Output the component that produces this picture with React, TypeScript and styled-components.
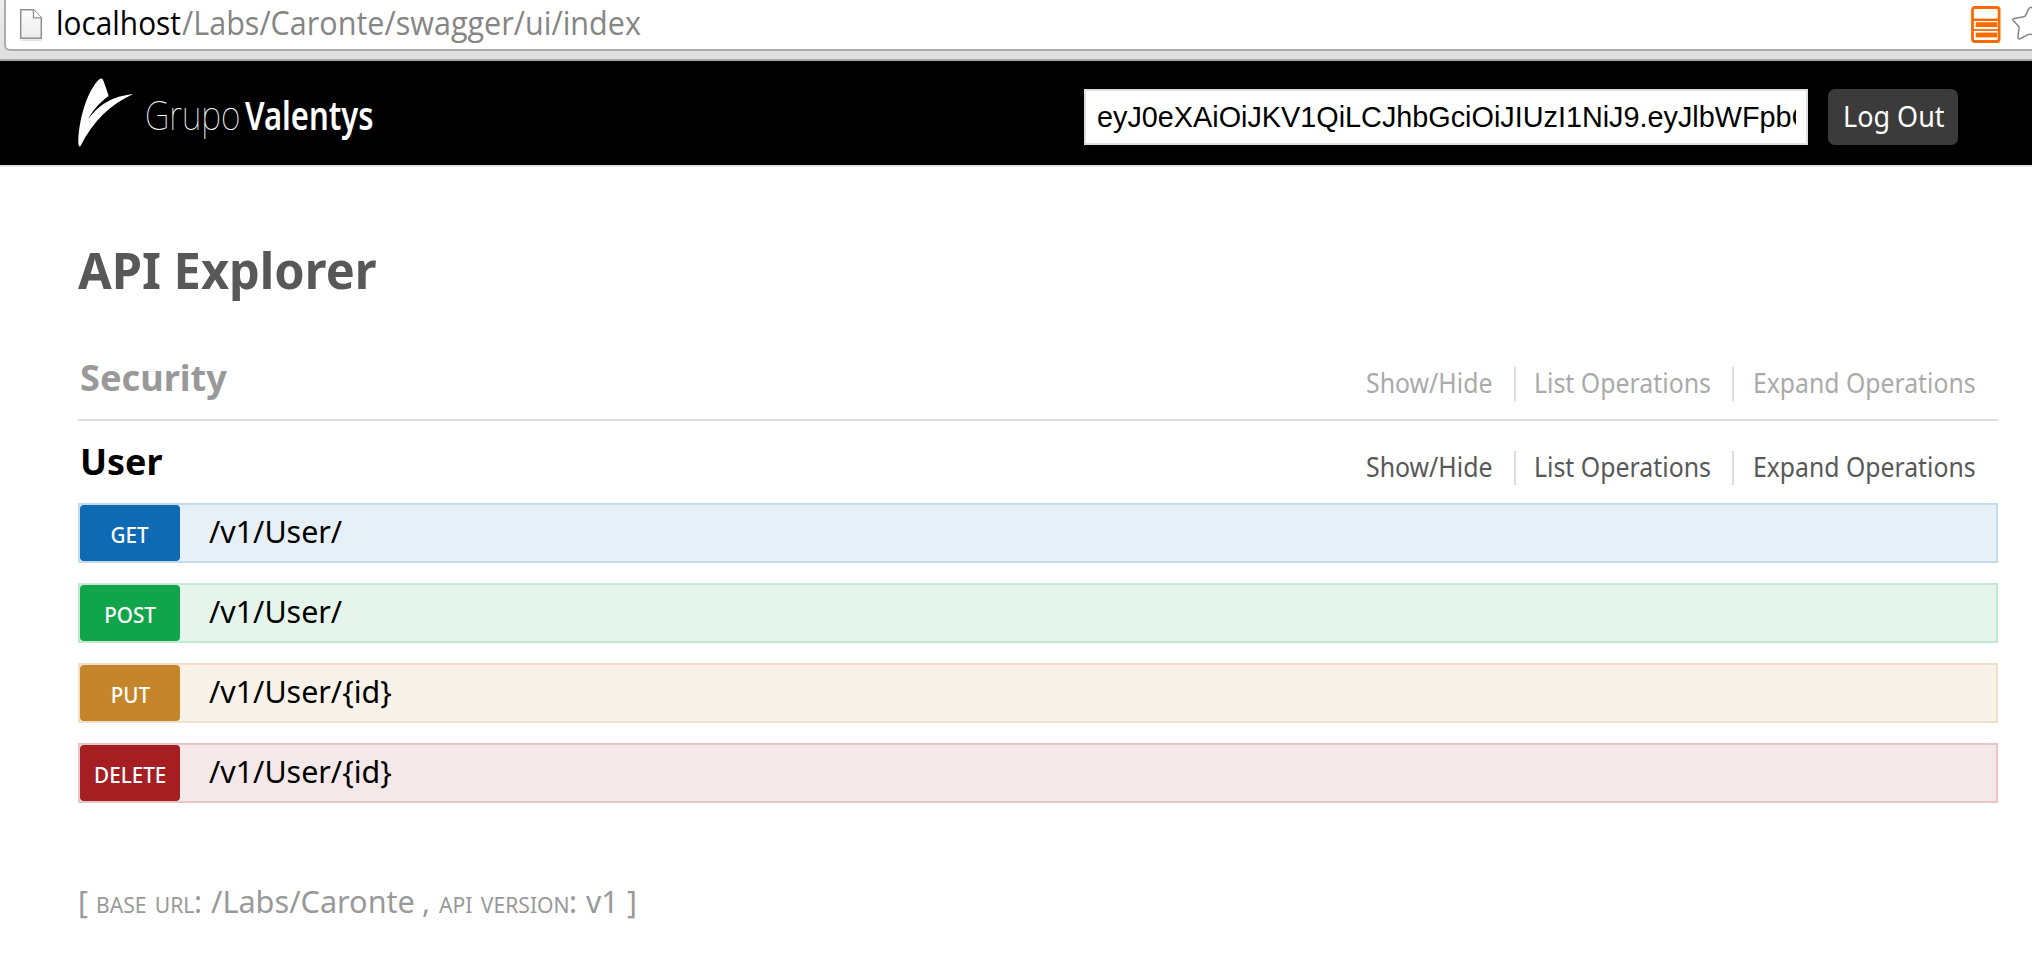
import React from "react";
import styled, { createGlobalStyle } from "styled-components";

const GlobalStyle = createGlobalStyle`
  * { box-sizing: border-box; }
  body {
    margin: 0;
    background: #fff;
    overflow: hidden;
    font-family: "Noto Sans", "Open Sans", sans-serif;
  }
`;

/* Slightly condensed text run; $w reserves its layout width. */
const Condensed = styled.span<{ $scale: number; $w?: number; $origin?: string }>`
  display: inline-block;
  flex: none;
  width: ${(p) => (p.$w ? `${p.$w}px` : "auto")};
  white-space: nowrap;
  transform: scaleX(${(p) => p.$scale});
  transform-origin: ${(p) => p.$origin ?? "left"} center;
`;

const Toolbar = styled.div`
  height: 61px;
  padding-left: 4px;
  background: linear-gradient(#eeeeee, #dfdfdf);
  border-bottom: 2px solid #a6a6a6;
`;

const AddressBar = styled.div`
  display: flex;
  align-items: flex-start;
  height: 51px;
  padding-left: 13px;
  background: #fff;
  border: solid #acacac;
  border-width: 0 0 2px 2px;
  border-bottom-left-radius: 6px;
`;

const Url = styled.div`
  display: flex;
  flex: 1;
  margin-left: 11px;
  font-family: "Open Sans", sans-serif;
  font-size: 32px;
  line-height: 46px;
  color: #858585;
`;

const Host = styled(Condensed)`
  color: #000;
`;

const BarIcons = styled.div`
  display: flex;
  flex: none;
  width: 64px;
  height: 49px;
`;

const Header = styled.header`
  display: flex;
  justify-content: space-between;
  height: 106px;
  padding: 0 74px 0 78px;
  background: #000;
  border-bottom: 2px solid #e6e6e6;
`;

const Brand = styled.div`
  display: flex;
  align-items: flex-start;
  color: #fff;
`;

const Mark = styled.svg`
  flex: none;
  margin-top: 17px;
`;

const BrandName = styled.div`
  display: flex;
  align-items: baseline;
  margin-left: 9px;
  line-height: 106px;
`;

const BrandLight = styled(Condensed)`
  font-size: 41px;
  font-weight: 100;
`;

const BrandStrong = styled(Condensed)`
  font-size: 39.5px;
  font-weight: 600;
`;

const Session = styled.div`
  display: flex;
  gap: 20px;
  padding-top: 28px;
`;

const TokenInput = styled.input`
  width: 724px;
  height: 56px;
  padding: 0 10px 0 11px;
  border: 2px solid #dfdfdf;
  border-radius: 0;
  outline: none;
  background: #fff;
  color: #000;
  font-family: "Liberation Sans", Arial, sans-serif;
  font-size: 28.8px;
`;

const LogOut = styled.button`
  width: 130px;
  height: 56px;
  padding: 0 0 2px 15px;
  border: 0;
  border-radius: 7px;
  background: #3b3b3b;
  color: #fff;
  font-family: inherit;
  font-size: 28.8px;
  line-height: 54px;
  text-align: left;
`;

const Main = styled.main`
  width: 1998px;
  padding: 73px 0 0 78px;
`;

const Title = styled.h1`
  margin: 0 0 37px;
  font-size: 50.4px;
  line-height: 60px;
  color: #585858;
`;

const ResourceHead = styled.div<{ $closed?: boolean }>`
  display: flex;
  justify-content: space-between;
  height: ${(p) => (p.$closed ? 84 : 82)}px;
  border-bottom: ${(p) => (p.$closed ? "2px solid #dddddd" : "0")};
`;

const ResourceName = styled.h2<{ $closed?: boolean }>`
  margin: 21px 0 0 2px;
  font-size: 36px;
  line-height: 40px;
  color: ${(p) => (p.$closed ? "#999999" : "#000")};
`;

const Options = styled.ul<{ $closed?: boolean }>`
  display: flex;
  margin: 30px 0 0;
  padding: 0;
  list-style: none;
  font-size: 26.6px;
  line-height: 32px;
  color: ${(p) => (p.$closed ? "#aaaaaa" : "#585858")};
`;

const Option = styled.li<{ $w: number; $pad: number; $last?: boolean }>`
  width: ${(p) => p.$w}px;
  height: 34px;
  padding-left: ${(p) => p.$pad}px;
  border-right: ${(p) => (p.$last ? "0" : "2px solid #dddddd")};
`;

const Operation = styled.div<{ $bg: string; $line: string }>`
  display: flex;
  height: 60px;
  margin-bottom: 20px;
  background: ${(p) => p.$bg};
  border: 2px solid ${(p) => p.$line};
`;

const Method = styled.span<{ $color: string }>`
  width: 100px;
  height: 56px;
  border-radius: 4px;
  background: ${(p) => p.$color};
  color: #fff;
  font-size: 22.4px;
  font-weight: 500;
  line-height: 60px;
  text-align: center;
`;

const Path = styled.span`
  padding-left: 28.5px;
  font-size: 31px;
  line-height: 52px;
  color: #000;
`;

const Footer = styled.footer`
  display: flex;
  align-items: baseline;
  margin-top: 76px;
  font-size: 31px;
  line-height: 44px;
  color: #999999;
`;

const SmallCaps = styled(Condensed)`
  font-size: 22.4px;
  word-spacing: 3px;
  text-transform: uppercase;
`;

const operations = [
  { method: "GET", path: "/v1/User/", color: "#0f6ab4", bg: "#e7eff7", line: "#c3d9ec" },
  { method: "POST", path: "/v1/User/", color: "#10a54a", bg: "#e5f5eb", line: "#c3e8d1" },
  { method: "PUT", path: "/v1/User/{id}", color: "#c5862b", bg: "#f9f2e9", line: "#f0e0ca" },
  { method: "DELETE", path: "/v1/User/{id}", color: "#a41e22", bg: "#f5e8e8", line: "#e8c6c7" },
];

function PageIcon() {
  return (
    <svg width="26" height="44" viewBox="0 0 26 44">
      <defs>
        <linearGradient id="paper" x1="0" y1="0" x2="0" y2="1">
          <stop offset="0" stopColor="#fdfdfd" />
          <stop offset="1" stopColor="#ececec" />
        </linearGradient>
      </defs>
      <path d="M1.8 40.2H22.5" stroke="#e2e2e2" strokeWidth="1.5" />
      <path d="M1.7 9.7H14.5L22.3 17.8V38.3H1.7Z" fill="url(#paper)" stroke="#8f8f8f" strokeWidth="1.5" />
      <path d="M14.5 9.7V17.8H22.3" fill="#fff" stroke="#8f8f8f" strokeWidth="1.3" />
    </svg>
  );
}

function ToolbarIcons() {
  return (
    <svg width="64" height="49" viewBox="1968 0 64 49">
      <g fill="none" stroke="#ff6a00" strokeWidth="2.8">
        <rect x="1972.5" y="7.5" width="26.6" height="34" rx="2.2" />
        <path d="M1972 19.8H2000" strokeWidth="2.4" />
        <path d="M1972 30H2000" strokeWidth="1.8" />
      </g>
      <rect x="1975.7" y="22.2" width="21.4" height="4.8" fill="#ff6a00" />
      <rect x="1975.7" y="32.6" width="21.4" height="4.8" fill="#ff6a00" />
      <path
        d="M2034 7.4H2030.4Q2029.3 7.4 2028.8 8.6L2025.4 15.6Q2025 16.6 2023.8 16.8L2014.2 18.4Q2011.9 19 2013.6 20.9L2018.4 26Q2019.2 27 2019 28.2L2017.9 37Q2018 39.6 2020.2 38.7L2028.4 34.4L2034 34"
        fill="none"
        stroke="#858585"
        strokeWidth="1.5"
      />
    </svg>
  );
}

function Links({ closed }: { closed?: boolean }) {
  return (
    <Options $closed={closed}>
      <Option $w={150} $pad={0.3}><Condensed $scale={0.935}>Show/Hide</Condensed></Option>
      <Option $w={218} $pad={18.3}><Condensed $scale={0.935}>List Operations</Condensed></Option>
      <Option $w={264} $pad={19.3} $last><Condensed $scale={0.931}>Expand Operations</Condensed></Option>
    </Options>
  );
}

export default function App() {
  return (
    <>
      <GlobalStyle />
      <Toolbar>
        <AddressBar>
          <PageIcon />
          <Url>
            <Host $scale={0.932} $w={125.5}>localhost</Host>
            <Condensed $scale={0.955}>/Labs/Caronte/swagger/ui/index</Condensed>
          </Url>
          <BarIcons><ToolbarIcons /></BarIcons>
        </AddressBar>
      </Toolbar>

      <Header>
        <Brand>
          <Mark width="58" height="70" viewBox="54 36 174 210" fill="#fff">
            <path d="M58 241Q54 238 55 222C57 165 77 85 113 44Q124 33 129 41Q140 70 146 90C115 113 97 135 84 160C119 115 155 91 220 84C150 116 100 165 62 239Q60 243 58 241Z" />
          </Mark>
          <BrandName>
            <BrandLight $scale={0.823} $w={100}>Grupo</BrandLight>
            <BrandStrong $scale={0.785}>Valentys</BrandStrong>
          </BrandName>
        </Brand>
        <Session>
          <TokenInput readOnly value="eyJ0eXAiOiJKV1QiLCJhbGciOiJIUzI1NiJ9.eyJlbWFpbCI6" />
          <LogOut><Condensed $scale={0.937}>Log Out</Condensed></LogOut>
        </Session>
      </Header>

      <Main>
        <Title><Condensed $scale={0.967}>API Explorer</Condensed></Title>

        <ResourceHead $closed>
          <ResourceName $closed><Condensed $scale={1.004}>Security</Condensed></ResourceName>
          <Links closed />
        </ResourceHead>

        <ResourceHead>
          <ResourceName><Condensed $scale={0.995}>User</Condensed></ResourceName>
          <Links />
        </ResourceHead>

        {operations.map((op) => (
          <Operation key={op.method} $bg={op.bg} $line={op.line}>
            <Method $color={op.color}>
              <Condensed $scale={0.922} $origin="center">{op.method}</Condensed>
            </Method>
            <Path><Condensed $scale={0.98}>{op.path}</Condensed></Path>
          </Operation>
        ))}

        <Footer>
          <Condensed $scale={0.97} $w={17.5}>[</Condensed>
          <SmallCaps $scale={0.942} $w={98}>base url</SmallCaps>
          <Condensed $scale={0.97} $w={17.5}>:</Condensed>
          <Condensed $scale={0.988} $w={211}>/Labs/Caronte</Condensed>
          <Condensed $scale={0.97} $w={17}>,</Condensed>
          <SmallCaps $scale={0.943} $w={129.5}>api version</SmallCaps>
          <Condensed $scale={0.97} $w={17.5}>:</Condensed>
          <Condensed $scale={0.97} $w={40.5}>v1</Condensed>
          <Condensed $scale={0.97}>]</Condensed>
        </Footer>
      </Main>
    </>
  );
}
